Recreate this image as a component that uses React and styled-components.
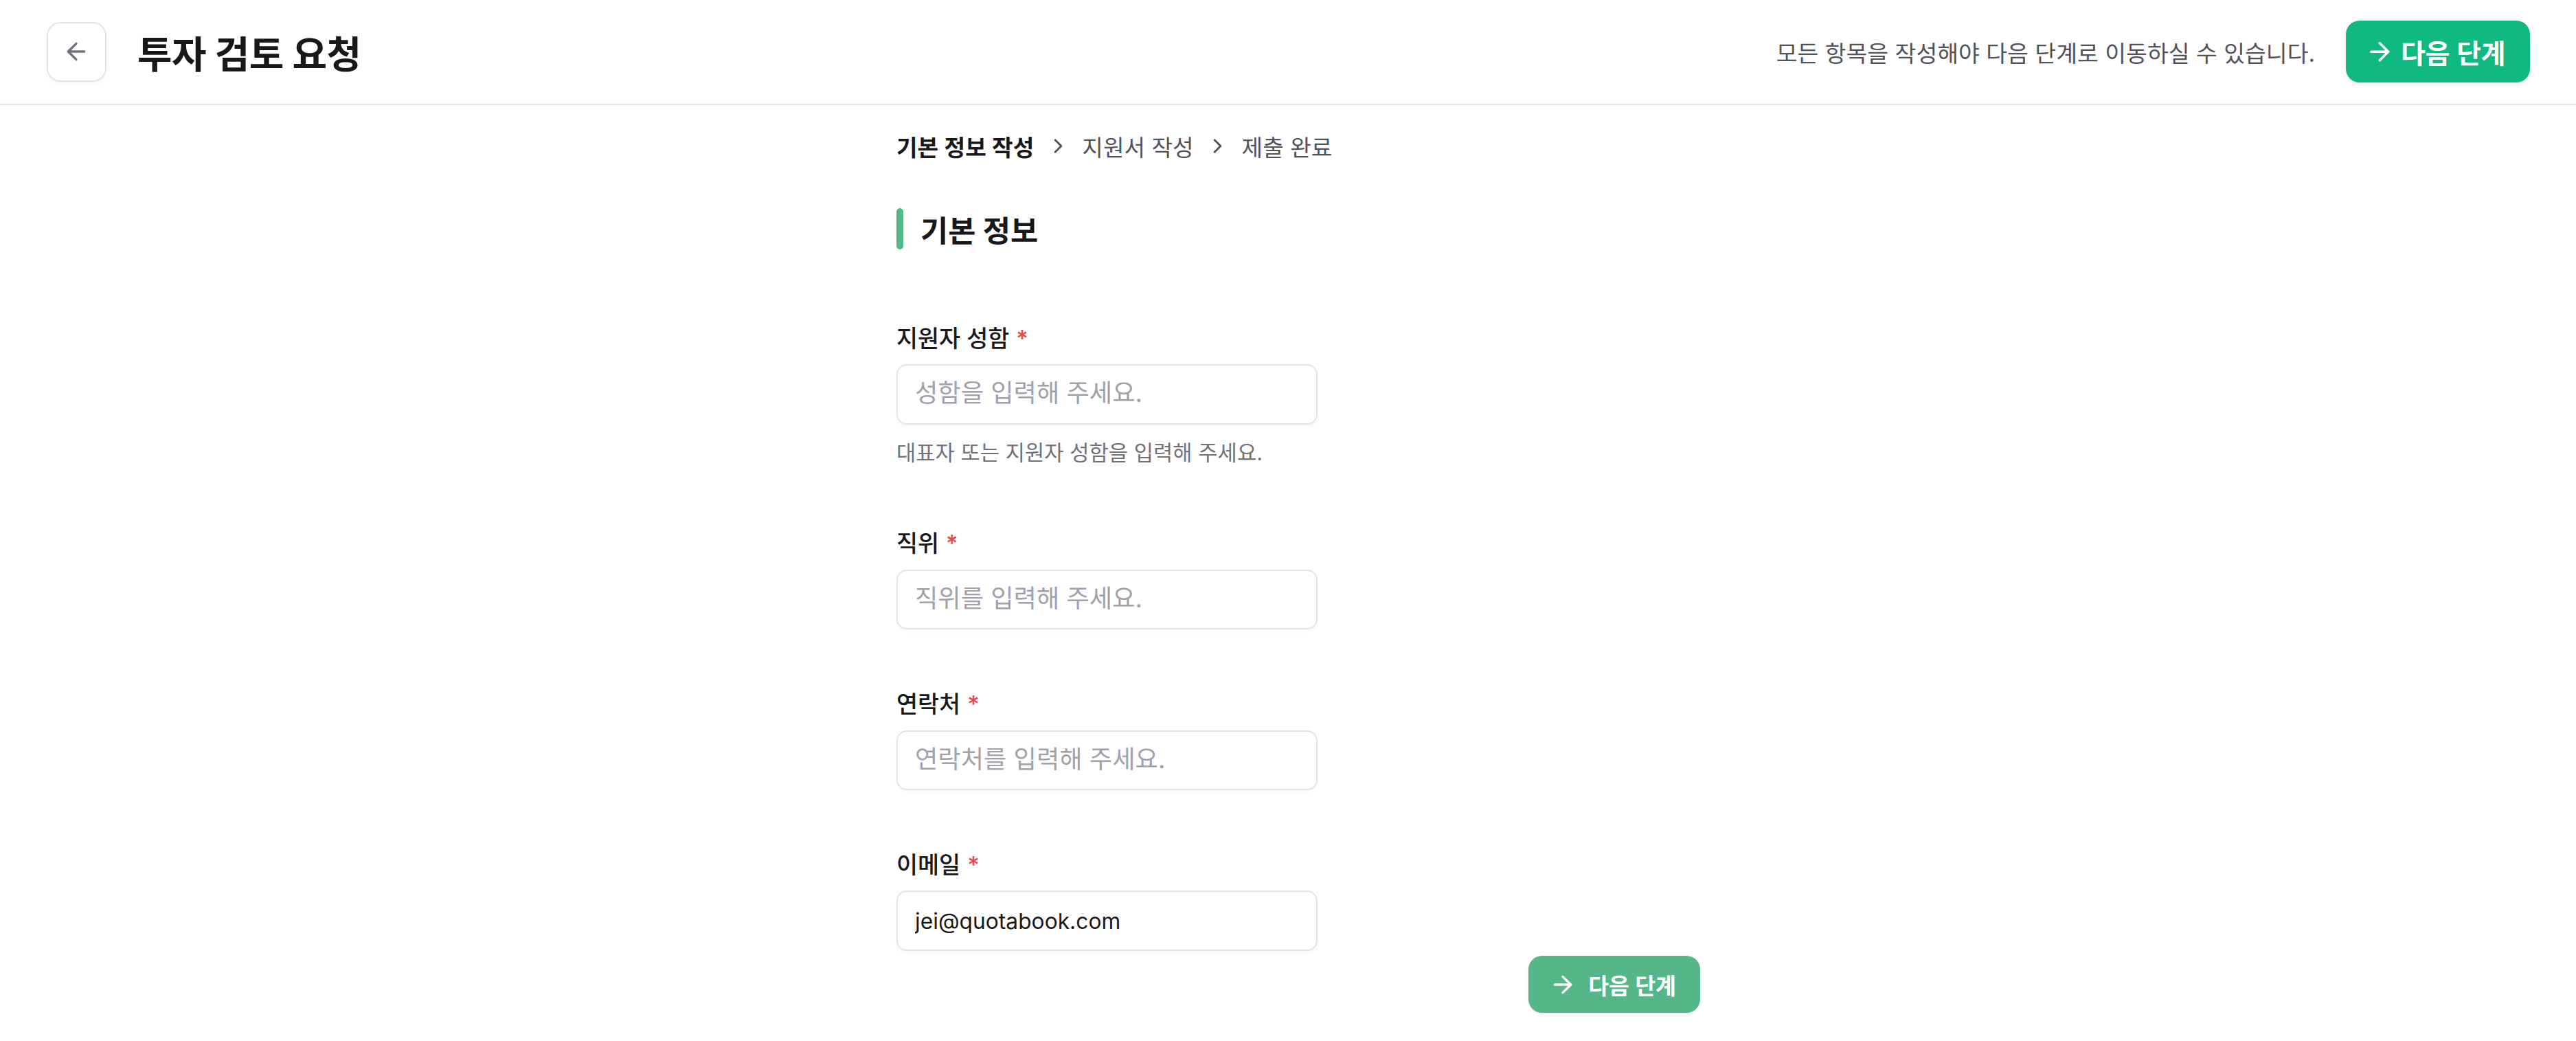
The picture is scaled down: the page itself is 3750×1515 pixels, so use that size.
import React from "react";
import styled, { createGlobalStyle } from "styled-components";
import { ArrowLeft, ArrowRight, ChevronRight } from "lucide-react";

const GlobalStyle = createGlobalStyle`
  html { zoom: 2.5; }
  html, body { margin: 0; padding: 0; background: #ffffff; }
  body {
    font-family: "Inter", "Noto Sans CJK KR", "Noto Sans", sans-serif;
    color: #18181b;
    -webkit-font-smoothing: antialiased;
  }
  * { box-sizing: border-box; }
`;

const Page = styled.div`
  display: flex;
  flex-direction: column;
  min-height: 606px;
`;

const Header = styled.header`
  height: 61px;
  display: flex;
  align-items: center;
  justify-content: space-between;
  padding: 0 27px 0 27px;
  border-bottom: 1px solid #e7e7e9;
`;

const HeaderSide = styled.div`
  display: flex;
  align-items: center;
  gap: ${(p) => p.$gap}px;
`;

const BackButton = styled.button`
  width: 35px;
  height: 35px;
  display: flex;
  align-items: center;
  justify-content: center;
  border: 1px solid #e4e4e7;
  border-radius: 8px;
  background: #fff;
  color: #71717a;
  padding: 0;
  box-shadow: 0 1px 2px rgba(0, 0, 0, 0.04);
`;

const Title = styled.h1`
  margin: 0;
  font-size: 22px;
  font-weight: 700;
  color: #18181b;
  letter-spacing: -0.2px;
`;

const Notice = styled.span`
  font-size: 13.4px;
  color: #52525b;
`;

const PrimaryButton = styled.button`
  display: flex;
  align-items: center;
  gap: ${(p) => p.$gap}px;
  height: ${(p) => p.$h}px;
  padding: 0 ${(p) => p.$pr}px 0 ${(p) => p.$pl}px;
  border: none;
  border-radius: 8px;
  background: ${(p) => p.$bg};
  color: #ffffff;
  font-family: inherit;
  font-size: ${(p) => p.$fs}px;
  font-weight: 600;
  box-shadow: 0 1px 2px rgba(0, 0, 0, 0.06);
`;

const Main = styled.main`
  width: 468px;
  margin-left: calc(50% - 228px);
  display: flex;
  flex-direction: column;
`;

const Breadcrumb = styled.nav`
  display: flex;
  align-items: center;
  gap: 7px;
  height: 20px;
  margin-top: 14px;
  font-size: 13.3px;
  color: #52525b;
`;

const Crumb = styled.span`
  color: ${(p) => (p.$active ? "#18181b" : "#52525b")};
  font-weight: ${(p) => (p.$active ? 600 : 400)};
`;

const Sep = styled.span`
  display: flex;
  align-items: center;
  color: #52525b;
`;

const SectionTitle = styled.h2`
  display: flex;
  align-items: center;
  gap: 10px;
  margin: 26px 0 0 0;
  font-size: 17.5px;
  font-weight: 700;
  color: #18181b;
  height: 24px;
  &::before {
    content: "";
    width: 4px;
    height: 24px;
    border-radius: 2px;
    background: #55b888;
  }
`;

const Form = styled.div`
  display: flex;
  flex-direction: column;
  gap: 33.5px;
  margin-top: 42px;
`;

const Field = styled.div`
  display: flex;
  flex-direction: column;
`;

const Label = styled.label`
  font-size: 13.5px;
  font-weight: 500;
  color: #18181b;
  line-height: 20px;
  height: 20px;
`;

const Required = styled.span`
  color: #e5484d;
  margin-left: 4px;
`;

const Input = styled.input`
  margin-top: 5px;
  width: 245px;
  height: 35px;
  border: 1px solid #e4e4e7;
  border-radius: 6px;
  padding: 0 10px;
  font-family: "Inter", "Noto Sans CJK KR", sans-serif;
  font-size: 12.7px;
  color: #18181b;
  outline: none;
  box-shadow: 0 1px 2px rgba(0, 0, 0, 0.03);
  &::placeholder {
    font-size: 14.5px;
    color: #a1a1aa;
  }
`;

const Hint = styled.p`
  margin: 8.5px 0 1.5px 0;
  font-size: 12.3px;
  line-height: 16px;
  color: #71717a;
`;

const Footer = styled.div`
  display: flex;
  justify-content: flex-end;
  margin-top: 3px;
`;

const fields = [
  { label: "지원자 성함", placeholder: "성함을 입력해 주세요.", hint: "대표자 또는 지원자 성함을 입력해 주세요." },
  { label: "직위", placeholder: "직위를 입력해 주세요." },
  { label: "연락처", placeholder: "연락처를 입력해 주세요." },
  { label: "이메일", placeholder: "이메일을 입력해 주세요.", value: "jei@quotabook.com" },
];

export default function App() {
  return (
    <>
      <GlobalStyle />
      <Page>
        <Header>
          <HeaderSide $gap={18}>
            <BackButton aria-label="뒤로">
              <ArrowLeft size={16} strokeWidth={2} />
            </BackButton>
            <Title>투자 검토 요청</Title>
          </HeaderSide>
          <HeaderSide $gap={18}>
            <Notice>모든 항목을 작성해야 다음 단계로 이동하실 수 있습니다.</Notice>
            <PrimaryButton $bg="#10b981" $h={36} $pl={11} $pr={14} $gap={4} $fs={15.5}>
              <ArrowRight size={17} strokeWidth={2} />
              다음 단계
            </PrimaryButton>
          </HeaderSide>
        </Header>
        <Main>
          <Breadcrumb>
            <Crumb $active>기본 정보 작성</Crumb>
            <Sep><ChevronRight size={14} strokeWidth={2} /></Sep>
            <Crumb>지원서 작성</Crumb>
            <Sep><ChevronRight size={14} strokeWidth={2} /></Sep>
            <Crumb>제출 완료</Crumb>
          </Breadcrumb>
          <SectionTitle>기본 정보</SectionTitle>
          <Form>
            {fields.map((f) => (
              <Field key={f.label}>
                <Label>
                  {f.label}
                  <Required>*</Required>
                </Label>
                <Input placeholder={f.placeholder} defaultValue={f.value} />
                {f.hint && <Hint>{f.hint}</Hint>}
              </Field>
            ))}
          </Form>
          <Footer>
            <PrimaryButton $bg="#55b687" $h={33} $pl={12} $pr={14} $gap={7} $fs={13}>
              <ArrowRight size={16} strokeWidth={2} />
              다음 단계
            </PrimaryButton>
          </Footer>
        </Main>
      </Page>
    </>
  );
}
